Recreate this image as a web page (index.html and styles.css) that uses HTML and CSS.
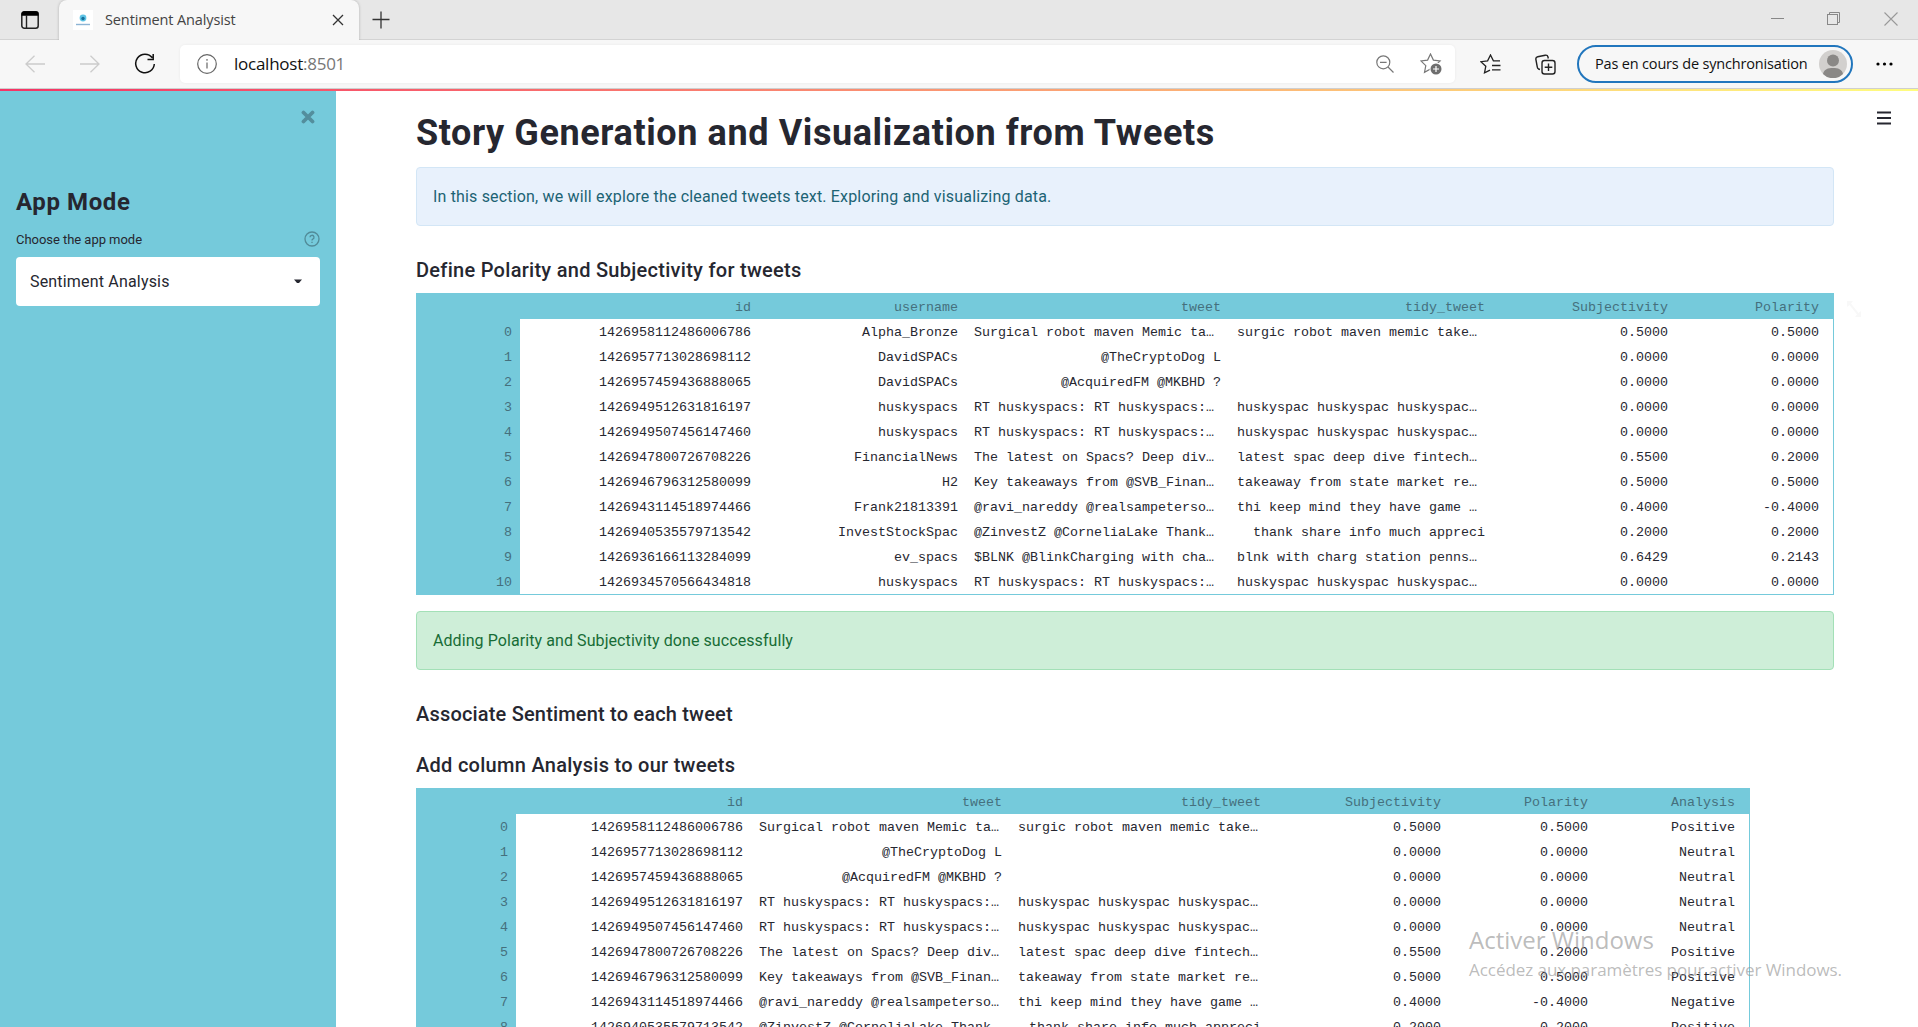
FILE: index.html
```html
<!DOCTYPE html>
<html lang="fr">
<head>
<meta charset="utf-8">
<title>Sentiment Analysist</title>
<link rel="stylesheet" href="styles.css">
</head>
<body>
<header class="browser">
  <div class="tabstrip">
    <div class="tab-actions"><svg width="20" height="20" viewBox="0 0 20 20"><rect x="1.8" y="1.8" width="16.4" height="16.4" rx="2.5" fill="none" stroke="#222" stroke-width="1.5"/><path d="M1.500 5.800V4a2.700 2.700 0 0 1 2.700-2.700h11.600A2.700 2.700 0 0 1 18.500 4v1.800z" fill="#000"/><path d="M6.500 5v13" stroke="#222" stroke-width="1.400"/></svg></div>
    <div class="tab">
      <svg class="favicon" width="20" height="20" viewBox="0 0 20 20"><rect width="20" height="20" fill="#fff"/><circle cx="10" cy="8" r="3.400" fill="#5fc4e6"/><circle cx="10" cy="8.500" r="1.700" fill="#17709b"/><path d="M3 14.500h14" stroke="#8db4d4" stroke-width="1.400"/></svg>
      <span class="tab-title">Sentiment Analysist</span>
      <svg class="tab-close" width="12" height="12" viewBox="0 0 12 12"><path d="M1 1l10 10M11 1L1 11" stroke="#333" stroke-width="1.300"/></svg>
    </div>
    <svg class="new-tab" width="18" height="18" viewBox="0 0 18 18"><path d="M9 0.500v17M.5 8.500h17" stroke="#333" stroke-width="1.300"/></svg>
    <div class="window-controls">
      <svg width="13" height="13" viewBox="0 0 13 13"><path d="M0 6.500h13" stroke="#888"/></svg>
      <svg width="14" height="14" viewBox="0 0 14 14" fill="none" stroke="#888"><rect x=".5" y="2.500" width="10" height="10"/><path d="M2.500 2.500v-2h10v10h-2"/></svg>
      <svg width="14" height="14" viewBox="0 0 14 14"><path d="M.5.5l13 13M13.500.5l-13 13" stroke="#999" stroke-width="1.100"/></svg>
    </div>
  </div>
  <div class="toolbar">
    <div class="nav">
      <svg width="20" height="18" viewBox="0 0 20 18" fill="none" stroke="#ccc" stroke-width="1.300"><path d="M20 9H1M9.500.7L1 9l8.500 8.300"/></svg>
      <svg width="20" height="18" viewBox="0 0 20 18" fill="none" stroke="#ccc" stroke-width="1.300"><path d="M0 9h19M10.500.7L19 9l-8.500 8.300"/></svg>
      <svg width="22" height="22" viewBox="0 0 22 22" fill="none" stroke="#111" stroke-width="1.500"><path d="M18.400 4.800A9.300 9.300 0 1 0 20.300 11M19.200 1v5.500h-5.700"/></svg>
    </div>
    <div class="address">
      <svg width="20" height="20" viewBox="0 0 20 20" fill="none" stroke="#666" stroke-width="1.200"><circle cx="10" cy="10" r="9.300"/><path d="M10 8.500v6M10 5v1.700"/></svg>
      <span class="url">localhost<span>:8501</span></span>
      <svg class="zoom" width="18" height="18" viewBox="0 0 18 18" fill="none" stroke="#777" stroke-width="1.200"><circle cx="7.300" cy="7.300" r="6.500"/><path d="M12 12l5.500 5.500M4 7.300h6.600"/></svg>
      <svg width="22" height="22" viewBox="0 0 22 22"><path d="M10.500 1l2.900 6.100 6.700.8-4.900 4.700 1.300 6.700-6-3.300-6 3.300 1.300-6.700L.9 7.900l6.700-.8z" fill="none" stroke="#777" stroke-width="1.200"/><circle cx="16" cy="16" r="6.500" fill="#fff"/><circle cx="16" cy="16" r="5.500" fill="#6e6e6e"/><path d="M16 13v6M13 16h6" stroke="#fff" stroke-width="1.200"/></svg>
    </div>
    <svg class="favorites" width="21" height="20" viewBox="0 0 21 20" fill="none" stroke="#222" stroke-width="1.300"><path d="M20 6.900h-6.600L10.500 1 7.600 6.900.9 7.700l4.900 4.500-1.300 6.600 5.500-2.700M12 11.500h8.500M12 15.800h8.500"/></svg>
    <svg class="collections" width="21" height="21" viewBox="0 0 21 21" fill="none" stroke="#222" stroke-width="1.400"><path d="M5 15.500L3.500 15a2.500 2.500 0 0 1-1.200-2L.9 5.500a2.300 2.300 0 0 1 1.800-2.700l7.500-1.600A2.400 2.400 0 0 1 13 3l.3 1.500"/><rect x="7" y="6.500" width="13" height="13.500" rx="2.500"/><path d="M13.500 9.500v7.500M9.700 13.300h7.600"/></svg>
    <div class="profile"><span>Pas en cours de synchronisation</span><svg width="28" height="28" viewBox="0 0 28 28"><circle cx="14" cy="14" r="14" fill="#d2d0ce"/><circle cx="14" cy="10.500" r="6" fill="#8a8886"/><path d="M4 24c1-5 5-6 10-6s9 1 10 6a14 14 0 0 1-20 0z" fill="#8a8886"/></svg></div>
    <svg class="more" width="17" height="4" viewBox="0 0 17 4"><circle cx="2" cy="2" r="1.600"/><circle cx="8.500" cy="2" r="1.600"/><circle cx="15" cy="2" r="1.600"/></svg>
  </div>
</header>
<div class="decoration"></div>
<div class="app">
  <aside class="sidebar">
    <svg class="sidebar-close" width="14" height="14" viewBox="0 0 14 14"><path d="M2.500 2.500l9 9M11.500 2.500l-9 9" stroke="#538e9d" stroke-width="3.800" stroke-linecap="round"/></svg>
    <h1 class="side-title">App Mode</h1>
    <div class="side-label"><span>Choose the app mode</span><svg width="16" height="16" viewBox="0 0 16 16" fill="none" stroke="#518b98" stroke-width="1.300"><circle cx="8" cy="8" r="7"/><path d="M6 6.300a2 2 0 1 1 2.800 1.800c-.6.300-.8.500-.8 1.300M8 10.800v1.300"/></svg></div>
    <div class="select"><span>Sentiment Analysis</span><svg width="8" height="5" viewBox="0 0 8 5"><path d="M0 .5h8L5 4H3z" fill="#262730"/></svg></div>
  </aside>
  <main class="content">
    <svg class="menu" width="14" height="14" viewBox="0 0 14 14"><path d="M0 1.500h14M0 7h14M0 12.500h14" stroke="#262730" stroke-width="1.800"/></svg>
    <h1 class="title">Story Generation and Visualization from Tweets</h1>
    <div class="alert info"><p>In this section, we will explore the cleaned tweets text. Exploring and visualizing data.</p></div>
    <h3 class="h-define">Define Polarity and Subjectivity for tweets</h3>
    <div class="frame frame-full">
      <svg class="expand" width="14" height="16" viewBox="0 0 14 16"><path d="M0 0h6L4 2.500 11.500 12 14 10v6H8l2-2.500L2.500 4 0 6z"/></svg>
      <table>
        <colgroup><col class="c103"><col class="c239"><col class="c207"><col class="c263"><col class="c264"><col class="c183"><col class="c151"></colgroup>
        <thead><tr><th></th><th>id</th><th>username</th><th>tweet</th><th>tidy_tweet</th><th>Subjectivity</th><th>Polarity</th></tr></thead>
        <tbody>
        <tr><th>0</th><td>1426958112486006786</td><td>Alpha_Bronze</td><td class="clip">Surgical robot maven Memic ta…</td><td class="clip">surgic robot maven memic take…</td><td>0.5000</td><td>0.5000</td></tr>
        <tr><th>1</th><td>1426957713028698112</td><td>DavidSPACs</td><td>@TheCryptoDog L</td><td></td><td>0.0000</td><td>0.0000</td></tr>
        <tr><th>2</th><td>1426957459436888065</td><td>DavidSPACs</td><td>@AcquiredFM @MKBHD ?</td><td></td><td>0.0000</td><td>0.0000</td></tr>
        <tr><th>3</th><td>1426949512631816197</td><td>huskyspacs</td><td class="clip">RT huskyspacs: RT huskyspacs:…</td><td class="clip">huskyspac huskyspac huskyspac…</td><td>0.0000</td><td>0.0000</td></tr>
        <tr><th>4</th><td>1426949507456147460</td><td>huskyspacs</td><td class="clip">RT huskyspacs: RT huskyspacs:…</td><td class="clip">huskyspac huskyspac huskyspac…</td><td>0.0000</td><td>0.0000</td></tr>
        <tr><th>5</th><td>1426947800726708226</td><td>FinancialNews</td><td class="clip">The latest on Spacs? Deep div…</td><td class="clip">latest spac deep dive fintech…</td><td>0.5500</td><td>0.2000</td></tr>
        <tr><th>6</th><td>1426946796312580099</td><td>H2</td><td class="clip">Key takeaways from @SVB_Finan…</td><td class="clip">takeaway from state market re…</td><td>0.5000</td><td>0.5000</td></tr>
        <tr><th>7</th><td>1426943114518974466</td><td>Frank21813391</td><td class="clip">@ravi_nareddy @realsampeterso…</td><td class="clip">thi keep mind they have game …</td><td>0.4000</td><td>-0.4000</td></tr>
        <tr><th>8</th><td>1426940535579713542</td><td>InvestStockSpac</td><td class="clip">@ZinvestZ @CorneliaLake Thank…</td><td>thank share info much appreci</td><td>0.2000</td><td>0.2000</td></tr>
        <tr><th>9</th><td>1426936166113284099</td><td>ev_spacs</td><td class="clip">$BLNK @BlinkCharging with cha…</td><td class="clip">blnk with charg station penns…</td><td>0.6429</td><td>0.2143</td></tr>
        <tr><th>10</th><td>1426934570566434818</td><td>huskyspacs</td><td class="clip">RT huskyspacs: RT huskyspacs:…</td><td class="clip">huskyspac huskyspac huskyspac…</td><td>0.0000</td><td>0.0000</td></tr>
        </tbody>
      </table>
    </div>
    <div class="alert success"><p>Adding Polarity and Subjectivity done successfully</p></div>
    <h3 class="h-associate">Associate Sentiment to each tweet</h3>
    <h3 class="h-add">Add column Analysis to our tweets</h3>
    <div class="frame frame-analysis">
      <table>
        <colgroup><col class="c99"><col class="c235"><col class="c259"><col class="c259"><col class="c180"><col class="c147"><col class="c147"></colgroup>
        <thead><tr><th></th><th>id</th><th>tweet</th><th>tidy_tweet</th><th>Subjectivity</th><th>Polarity</th><th>Analysis</th></tr></thead>
        <tbody>
        <tr><th>0</th><td>1426958112486006786</td><td class="clip">Surgical robot maven Memic ta…</td><td class="clip">surgic robot maven memic take…</td><td>0.5000</td><td>0.5000</td><td>Positive</td></tr>
        <tr><th>1</th><td>1426957713028698112</td><td>@TheCryptoDog L</td><td></td><td>0.0000</td><td>0.0000</td><td>Neutral</td></tr>
        <tr><th>2</th><td>1426957459436888065</td><td>@AcquiredFM @MKBHD ?</td><td></td><td>0.0000</td><td>0.0000</td><td>Neutral</td></tr>
        <tr><th>3</th><td>1426949512631816197</td><td class="clip">RT huskyspacs: RT huskyspacs:…</td><td class="clip">huskyspac huskyspac huskyspac…</td><td>0.0000</td><td>0.0000</td><td>Neutral</td></tr>
        <tr><th>4</th><td>1426949507456147460</td><td class="clip">RT huskyspacs: RT huskyspacs:…</td><td class="clip">huskyspac huskyspac huskyspac…</td><td>0.0000</td><td>0.0000</td><td>Neutral</td></tr>
        <tr><th>5</th><td>1426947800726708226</td><td class="clip">The latest on Spacs? Deep div…</td><td class="clip">latest spac deep dive fintech…</td><td>0.5500</td><td>0.2000</td><td>Positive</td></tr>
        <tr><th>6</th><td>1426946796312580099</td><td class="clip">Key takeaways from @SVB_Finan…</td><td class="clip">takeaway from state market re…</td><td>0.5000</td><td>0.5000</td><td>Positive</td></tr>
        <tr><th>7</th><td>1426943114518974466</td><td class="clip">@ravi_nareddy @realsampeterso…</td><td class="clip">thi keep mind they have game …</td><td>0.4000</td><td>-0.4000</td><td>Negative</td></tr>
        <tr><th>8</th><td>1426940535579713542</td><td class="clip">@ZinvestZ @CorneliaLake Thank…</td><td>thank share info much appreci</td><td>0.2000</td><td>0.2000</td><td>Positive</td></tr>
        </tbody>
      </table>
    </div>
  </main>
</div>
<div class="activation"><div class="activation-title">Activer Windows</div><div class="activation-text">Accédez aux paramètres pour activer Windows.</div></div>
</body>
</html>
```
FILE: styles.css
```css
* { box-sizing: border-box; }
html, body { height: 100%; }
body { margin: 0; overflow: hidden; display: flex; flex-direction: column; background: #fff; color: #262730; font-family: Roboto, "Liberation Sans", sans-serif; font-size: 16px; }
svg { display: block; flex: none; }
h1, h3, p { margin: 0; white-space: nowrap; }

.browser { flex: none; height: 89px; background: #f7f7f7; border-bottom: 1px solid #cfcfcf; font-family: "Open Sans", sans-serif; white-space: nowrap; }
.tabstrip { display: flex; height: 40px; background: #e7e7e7; border-bottom: 1px solid #d3d3d3; }
.tab-actions { width: 59px; padding: 10px 0 0 20px; }
.tab { display: flex; align-items: center; width: 300px; height: 40px; padding: 0 15px 0 14px; background: #f7f7f7; border-radius: 8px 8px 0 0; box-shadow: 0 0 3px rgba(0,0,0,.25); clip-path: inset(0 -4px 0 -4px); }
.tab-title { flex: 1; margin-left: 12px; padding-bottom: 2px; font-size: 14.5px; letter-spacing: -.12px; color: #444; }
.new-tab { margin: 11px 0 0 13px; }
.window-controls { display: flex; align-items: center; gap: 43px; height: 37px; margin-left: auto; padding-right: 20px; }
.toolbar { display: flex; align-items: center; height: 48px; }
.nav { display: flex; align-items: center; gap: 35px; width: 180px; padding-left: 25px; }
.nav svg:last-child { margin-left: -1px; }
.address { display: flex; align-items: center; width: 1275px; height: 38px; padding: 0 13px 0 17px; background: #fff; border-radius: 5px; box-shadow: 0 0 3px rgba(0,0,0,.06); }
.url { margin-left: 17px; padding-bottom: 2px; font-size: 17px; letter-spacing: -.25px; color: #111; }
.url span { color: #777; }
.zoom { margin-left: auto; margin-right: 26px; }
.favorites { margin-left: 25px; }
.collections { margin-left: 34px; }
.profile { display: flex; align-items: center; justify-content: space-between; width: 276px; height: 38px; margin-left: 21px; padding: 0 4px 0 16px; border: 2px solid #2176bd; border-radius: 19px; font-size: 14.5px; letter-spacing: -.17px; color: #111; }
.profile span { padding-bottom: 2px; }
.more { margin-left: 23px; }

.decoration { flex: none; height: 2px; background: linear-gradient(to right, #f63366, #fffd80); }
.app { display: flex; flex: 1; min-height: 0; }

.sidebar { width: 336px; padding: 19px 16px 0; background: #75cadb; }
.sidebar-close { margin: 0 5px 0 auto; }
.side-title { margin-top: 62px; font-size: 24px; line-height: 32px; letter-spacing: .6px; }
.side-label { display: flex; align-items: center; justify-content: space-between; margin-top: 9px; height: 24px; font-size: 13px; letter-spacing: -.04px; white-space: nowrap; }
.select { display: flex; align-items: center; justify-content: space-between; height: 49px; margin-top: 6px; padding: 0 18px 0 14px; background: #fff; border-radius: 4px; font-size: 16px; letter-spacing: .18px; }

.content { position: relative; flex: 1; min-width: 0; padding: 17px 84px 0 80px; overflow: hidden; }
.menu { position: absolute; right: 27px; top: 20px; }
.title { height: 50px; font-size: 36px; line-height: 50px; letter-spacing: .6px; }
.alert { height: 59px; padding: 0 16px; border: 1px solid; border-radius: 4px; line-height: 57px; }
.info { margin-top: 9px; background: #e8f1fc; border-color: #d3e6f6; color: #1c6374; letter-spacing: .17px; }
.success { margin-top: 16px; background: #ceeed8; border-color: #a3e0b7; color: #176c36; letter-spacing: .08px; }
h3 { height: 30px; font-size: 20px; font-weight: 500; line-height: 30px; }
.h-define { margin: 29px 0 8px; letter-spacing: .28px; }
.h-associate { margin-top: 29px; letter-spacing: .18px; }
.h-add { margin: 21px 0 8px; letter-spacing: .28px; }

.frame { position: relative; border: 1px solid #75cadb; }
.frame-full { width: 1418px; }
.frame-analysis { width: 1334px; }
.expand { position: absolute; right: -28px; top: 7px; fill: #f8f8f8; }
table { table-layout: fixed; border-collapse: collapse; width: 0; font-family: "Liberation Mono", monospace; font-size: 13.333px; }
.frame thead { background: #75cadb; }
.frame thead tr { box-shadow: 6px 0 0 #75cadb; }
tr { height: 25px; }
th, td { height: 25px; padding: 2px 8px 0; line-height: 23px; text-align: right; white-space: pre; overflow: hidden; }
th { font-weight: 400; color: #45707d; background: #75cadb; }
.clip { text-align: left; }
.c99 { width: 99px; } .c103 { width: 103px; } .c147 { width: 147px; } .c151 { width: 151px; }
.c180 { width: 180px; } .c183 { width: 183px; } .c207 { width: 207px; } .c235 { width: 235px; }
.c239 { width: 239px; } .c259 { width: 259px; } .c263 { width: 263px; } .c264 { width: 264px; }

.activation { position: absolute; left: 1469px; top: 922px; font-family: "Open Sans", sans-serif; color: rgba(150,150,150,.65); white-space: nowrap; }
.activation-title { font-size: 24px; line-height: 36px; }
.activation-text { font-size: 17px; line-height: 24px; letter-spacing: -.05px; }
```
